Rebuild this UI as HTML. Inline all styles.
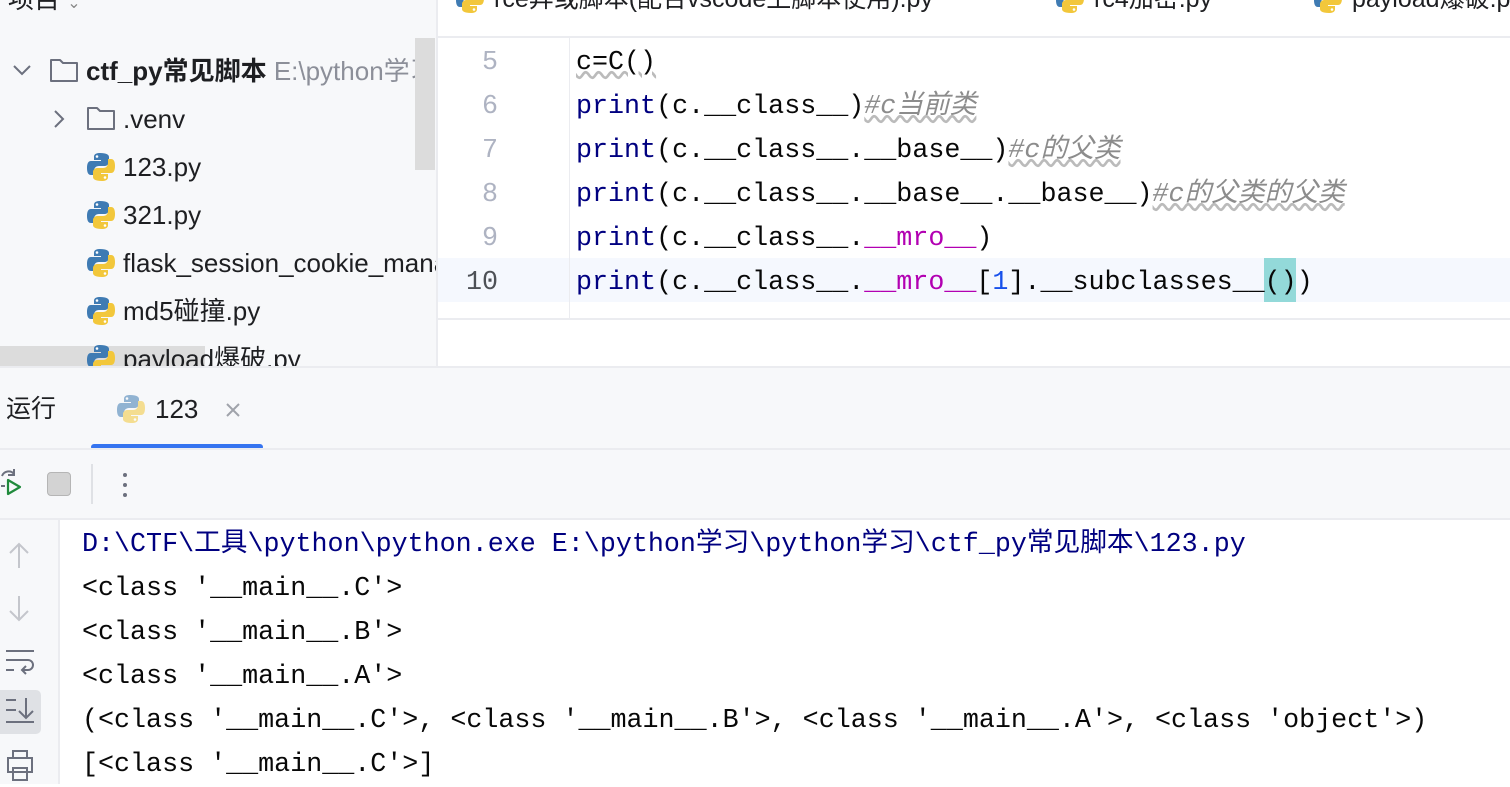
<!DOCTYPE html>
<html><head><meta charset="utf-8"><style>
*{margin:0;padding:0;box-sizing:border-box}
body{width:1510px;height:784px;overflow:hidden;background:#fff;position:relative;font-family:"Liberation Sans","Noto Sans CJK SC",sans-serif;color:#1e1f22}
.abs{position:absolute}
.mono{font-family:"Liberation Mono","Noto Sans CJK SC",monospace;font-size:26.7px;white-space:pre}
.py{position:absolute;width:28px;height:30px}
.row{position:absolute;font-size:26px;white-space:nowrap;line-height:30px}
</style></head><body>
<svg width="0" height="0" style="position:absolute"><defs>
<g id="py"><path d="M13 1c-6 0-6 3-6 4v3h7v1H4c-3 0-4 3-4 7s1 7 4 7h3v-4c0-3 2-5 5-5h6c2 0 4-2 4-4V5c0-2-2-4-9-4z" fill="#3f7bb3"/><circle cx="10" cy="4.5" r="1.3" fill="#fff"/><path d="M15 29c6 0 6-3 6-4v-3h-7v-1h10c3 0 4-3 4-7s-1-7-4-7h-3v4c0 3-2 5-5 5h-6c-2 0-4 2-4 4v5c0 2 2 4 9 4z" fill="#f2c73b"/><circle cx="18" cy="25.5" r="1.3" fill="#fff"/></g>
</defs></svg>

<!-- sidebar -->
<div class="abs" style="left:0;top:0;width:436px;height:366px;background:#f7f8fa"></div>
<div class="abs" style="left:436px;top:0;width:2px;height:366px;background:#ebecf0"></div>
<div class="row" style="left:8px;top:-16px">项目 <span style="color:#888;font-size:16px">⌄</span></div>
<svg class="abs" style="left:12px;top:62px" width="20" height="16"><path d="M2 4l8 8 8-8" fill="none" stroke="#6c707e" stroke-width="2"/></svg>
<svg class="abs" style="left:49px;top:57px" width="30" height="26"><path d="M2 3h9l3 3h14v18H2z" fill="none" stroke="#6c707e" stroke-width="2" stroke-linejoin="round"/></svg>
<div class="row" style="left:86px;top:56px;font-weight:bold">ctf_py常见脚本 <span style="font-weight:normal;color:#8c8f99">E:\python学习</span></div>
<div class="abs" style="left:415px;top:38px;width:20px;height:132px;background:#dcdcdc"></div>
<svg class="abs" style="left:52px;top:108px" width="14" height="22"><path d="M3 3l8 8-8 8" fill="none" stroke="#6c707e" stroke-width="2"/></svg>
<svg class="abs" style="left:86px;top:105px" width="30" height="26"><path d="M2 3h9l3 3h14v18H2z" fill="none" stroke="#6c707e" stroke-width="2" stroke-linejoin="round"/></svg>
<div class="row" style="left:123px;top:104px">.venv</div>
<svg class="py" style="left:87px;top:152px" viewBox="0 0 28 30"><use href="#py"/></svg><div class="row" style="left:123px;top:152px">123.py</div>
<svg class="py" style="left:87px;top:200px" viewBox="0 0 28 30"><use href="#py"/></svg><div class="row" style="left:123px;top:200px">321.py</div>
<svg class="py" style="left:87px;top:248px" viewBox="0 0 28 30"><use href="#py"/></svg><div class="row" style="left:123px;top:248px;width:313px;overflow:hidden">flask_session_cookie_manager3.py</div>
<svg class="py" style="left:87px;top:296px" viewBox="0 0 28 30"><use href="#py"/></svg><div class="row" style="left:123px;top:296px">md5碰撞.py</div>
<div class="abs" style="left:0;top:346px;width:205px;height:20px;background:#dcdcdc"></div>
<div class="abs" style="left:0;top:340px;width:436px;height:26px;overflow:hidden"><svg class="py" style="left:87px;top:4px" viewBox="0 0 28 30"><use href="#py"/></svg><div class="row" style="left:123px;top:4px">payload爆破.py</div></div>

<!-- tabs -->
<div class="abs" style="left:438px;top:0;width:1072px;height:36px;background:#fff;overflow:hidden">
<svg class="py" style="left:18px;top:-16px" viewBox="0 0 28 30"><use href="#py"/></svg><div class="row" style="left:56px;top:-16px;font-size:25px">rce异或脚本(配合vscode上脚本使用).py</div>
<svg class="py" style="left:618px;top:-16px" viewBox="0 0 28 30"><use href="#py"/></svg><div class="row" style="left:656px;top:-16px;font-size:25px">rc4加密.py</div>
<svg class="py" style="left:876px;top:-16px" viewBox="0 0 28 30"><use href="#py"/></svg><div class="row" style="left:914px;top:-16px;font-size:25px">payload爆破.py</div>
</div>
<div class="abs" style="left:438px;top:36px;width:1072px;height:2px;background:#ebecf0"></div>

<!-- editor -->
<div class="abs" style="left:438px;top:258px;width:1072px;height:44px;background:#f5f8fe"></div>
<div class="abs" style="left:569px;top:38px;width:1px;height:280px;background:#ebecf0"></div>
<div class="abs" style="left:438px;top:318px;width:1072px;height:2px;background:#ebecf0"></div>
<div class="abs mono" style="left:438px;top:41px;width:60px;text-align:right;line-height:44px;color:#aeb3c2">5
6
7
8
9
<span style="color:#4e5157">10</span></div>
<div class="abs" style="left:1264px;top:258px;width:32px;height:44px;background:#93d9d9"></div>
<div class="abs mono" style="left:576px;top:41px;line-height:44px;color:#080808"><span style="text-decoration:underline wavy #bbb">c=C()</span>
<span style="color:#000080">print</span>(c.__class__)<i style="color:#8c8c8c;text-decoration:underline wavy #bbb">#c当前类</i>
<span style="color:#000080">print</span>(c.__class__.__base__)<i style="color:#8c8c8c;text-decoration:underline wavy #bbb">#c的父类</i>
<span style="color:#000080">print</span>(c.__class__.__base__.__base__)<i style="color:#8c8c8c;text-decoration:underline wavy #bbb">#c的父类的父类</i>
<span style="color:#000080">print</span>(c.__class__.<span style="color:#b200b2">__mro__</span>)
<span style="color:#000080">print</span>(c.__class__.<span style="color:#b200b2">__mro__</span>[<span style="color:#1750eb">1</span>].__subclasses__())</div>

<!-- bottom panel -->
<div class="abs" style="left:0;top:366px;width:1510px;height:2px;background:#ebecf0"></div>
<div class="abs" style="left:0;top:368px;width:1510px;height:150px;background:#f7f8fa"></div>
<div class="row" style="left:6px;top:394px;font-size:25px">运行</div>
<svg class="py" style="left:117px;top:394px;opacity:.55" viewBox="0 0 28 30"><use href="#py"/></svg>
<div class="row" style="left:155px;top:394px">123</div>
<svg class="abs" style="left:225px;top:402px" width="16" height="16"><path d="M2 2l12 12M14 2L2 14" stroke="#a0a3ab" stroke-width="2"/></svg>
<div class="abs" style="left:91px;top:444px;width:172px;height:6px;border-radius:3px;background:#3574f0"></div>
<div class="abs" style="left:0;top:448px;width:1510px;height:2px;background:#ebecf0"></div>
<svg class="abs" style="left:0;top:468px" width="24" height="34"><path d="M2 8a7 7 0 0 1 12 -2M14 1v6h-6" fill="none" stroke="#6c707e" stroke-width="2"/><path d="M8 12l12 7-12 7z" fill="none" stroke="#208a3c" stroke-width="2.2" stroke-linejoin="round"/><path d="M1 18h4" stroke="#6c707e" stroke-width="2"/></svg>
<div class="abs" style="left:47px;top:472px;width:24px;height:24px;border-radius:4px;background:#d3d3d3;border:1.5px solid #b5b5b5"></div>
<div class="abs" style="left:91px;top:464px;width:2px;height:40px;background:#dfe1e5"></div>
<div class="abs" style="left:123px;top:473px;width:4px;height:4px;border-radius:2px;background:#6c707e"></div>
<div class="abs" style="left:123px;top:483px;width:4px;height:4px;border-radius:2px;background:#6c707e"></div>
<div class="abs" style="left:123px;top:493px;width:4px;height:4px;border-radius:2px;background:#6c707e"></div>
<div class="abs" style="left:0;top:518px;width:1510px;height:2px;background:#ebecf0"></div>
<div class="abs" style="left:0;top:520px;width:58px;height:264px;background:#f7f8fa"></div>
<div class="abs" style="left:58px;top:520px;width:2px;height:264px;background:#ebecf0"></div>
<svg class="abs" style="left:6px;top:540px" width="26" height="30"><path d="M13 4v24M4 13l9-9 9 9" fill="none" stroke="#c4c6cc" stroke-width="2"/></svg>
<svg class="abs" style="left:6px;top:594px" width="26" height="30"><path d="M13 2v24M4 17l9 9 9-9" fill="none" stroke="#c4c6cc" stroke-width="2"/></svg>
<svg class="abs" style="left:4px;top:648px" width="32" height="28"><path d="M2 3h28M2 12h22a5 5 0 0 1 0 10h-6M22 18l-4 4 4 4M2 22h8" fill="none" stroke="#6c707e" stroke-width="2"/></svg>
<div class="abs" style="left:0;top:690px;width:41px;height:44px;background:#dfe1e5;border-radius:0 5px 5px 0"></div>
<svg class="abs" style="left:4px;top:696px" width="32" height="32"><path d="M2 4h10M2 14h10M2 26h28M22 2v20M15 15l7 7 7-7" fill="none" stroke="#6c707e" stroke-width="2"/></svg>
<svg class="abs" style="left:4px;top:748px" width="32" height="36"><path d="M9 10V3h14v7M4 10h24v14H4zM9 20h14v12H9z" fill="none" stroke="#6c707e" stroke-width="2"/></svg>
<div class="abs mono" style="left:82px;top:523px;line-height:44px;color:#080808"><span style="color:#000080">D:\CTF\工具\python\python.exe E:\python学习\python学习\ctf_py常见脚本\123.py</span>
&lt;class '__main__.C'&gt;
&lt;class '__main__.B'&gt;
&lt;class '__main__.A'&gt;
(&lt;class '__main__.C'&gt;, &lt;class '__main__.B'&gt;, &lt;class '__main__.A'&gt;, &lt;class 'object'&gt;)
[&lt;class '__main__.C'&gt;]</div>
</body></html>
